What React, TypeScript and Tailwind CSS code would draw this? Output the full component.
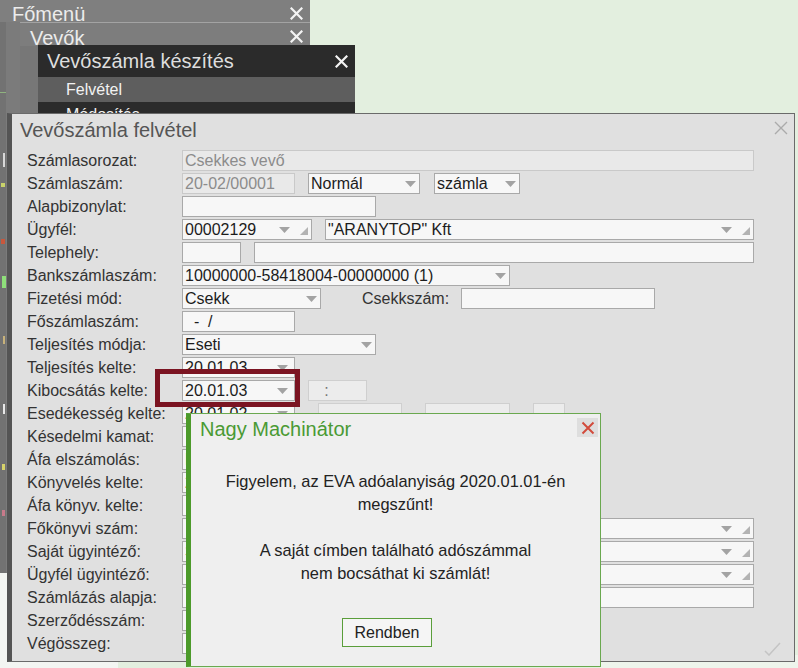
import React from "react";

function Arrow() {
  return (
    <svg width="11" height="6" viewBox="0 0 11 6" className="shrink-0">
      <path d="M0 0H11L5.5 6Z" fill="#a3a3a3" />
    </svg>
  );
}

function Grip() {
  return (
    <svg width="8" height="8" viewBox="0 0 8 8" className="shrink-0">
      <path d="M8 0V8H0Z" fill="#b3b3b3" />
    </svg>
  );
}

type FieldProps = {
  cls: string;
  text?: string;
  disabled?: boolean;
  faint?: boolean;
  kind?: "select" | "date" | "combo";
};

function Field({ cls, text = "", disabled, faint, kind }: FieldProps) {
  const look = disabled
    ? "bg-[#e9e9e9] border-[#c9c9c9] text-[#8c8c8c]"
    : faint
    ? "bg-[#ececec] border-[#cfcfcf] text-[#777]"
    : "bg-[#f7f7f7] border-[#a9a9a9] text-[#1c1c1c]";
  const pr = kind === "date" ? "pr-[6px]" : "pr-[3px]";
  return (
    <div className={`${cls} h-[21px] shrink-0 border flex items-center pl-[2px] ${pr} ${look}`}>
      <span className="flex-1 whitespace-pre overflow-hidden leading-[19px]">{text}</span>
      {(kind === "select" || kind === "date") && <Arrow />}
      {kind === "combo" && (
        <>
          <Arrow />
          <span className="ml-[10px] self-end mb-[4px] flex">
            <Grip />
          </span>
        </>
      )}
    </div>
  );
}

function Row({ label, children }: { label: string; children?: React.ReactNode }) {
  return (
    <div className="h-[23px] flex items-center">
      <div className="w-[170px] pl-[15px] shrink-0 text-[#333] whitespace-nowrap">{label}</div>
      {children}
    </div>
  );
}

function WhiteX({ size = 13 }: { size?: number }) {
  return (
    <svg width={size} height={size} viewBox="0 0 13 13" className="shrink-0">
      <path d="M1.5 1.5L11.5 11.5M11.5 1.5L1.5 11.5" stroke="#f4f4f4" strokeWidth="2.2" strokeLinecap="square" />
    </svg>
  );
}

export default function App() {
  return (
    <div className="relative w-[798px] h-[668px] overflow-hidden bg-[#e3efdf] font-['Liberation_Sans',Arial,sans-serif] text-[16px]">
      {/* pale patch bottom-left */}
      <div className="absolute left-0 top-[573px] w-[118px] h-[95px] bg-[#f3f5f2]" />
      <div className="absolute left-[600px] top-[655px] w-[198px] h-[13px] bg-[#eef5ec]" />

      {/* Főmenü window */}
      <div className="absolute left-0 top-0 w-[310px] h-[573px] bg-[#7b7b7b] flex flex-col">
        <div className="h-[22px] flex items-start justify-between pl-[12px] pr-[7px] bg-[#7f7f7f]">
          <span className="text-[20px] leading-[22px] mt-[3px] text-[#ececec] whitespace-nowrap">Főmenü</span>
          <span className="mt-[7px] flex">
            <WhiteX />
          </span>
        </div>
        <div className="flex-1 flex">
          <div className="w-[6px] flex flex-col bg-[#727272]">
            <div className="h-[70px]" />
            <div className="h-[1px] w-[6px] bg-[#8fb27f]" />
            <div className="h-[60px]" />
            <div className="h-[14px] w-[2px] ml-[3px] bg-[#d8d8d8]" />
            <div className="h-[16px]" />
            <div className="h-[4px] w-[4px] ml-[1px] bg-[#c9d36a]" />
            <div className="h-[52px]" />
            <div className="h-[5px] w-[4px] ml-[1px] bg-[#c8573c]" />
            <div className="h-[32px]" />
            <div className="h-[12px] w-[4px] ml-[2px] bg-[#8fe07a]" />
            <div className="h-[48px]" />
            <div className="h-[8px] w-[2px] ml-[3px] bg-[#c8b27a]" />
            <div className="h-[60px]" />
            <div className="h-[10px] w-[2px] ml-[3px] bg-[#e8e8e8]" />
            <div className="h-[50px]" />
            <div className="h-[6px] w-[3px] ml-[2px] bg-[#d7d36a]" />
            <div className="h-[40px]" />
            <div className="h-[6px] w-[3px] ml-[2px] bg-[#c87a8a]" />
          </div>
        </div>
      </div>

      {/* Vevők window */}
      <div className="absolute left-[20px] top-[22px] w-[290px] h-[551px] bg-[#777] border-t border-[#a3a3a3] flex flex-col">
        <div className="h-[23px] flex items-start justify-between pl-[10px] pr-[7px] bg-[#7d7d7d]">
          <span className="text-[20px] leading-[22px] mt-[4px] text-[#ececec] whitespace-nowrap">Vevők</span>
          <span className="mt-[7px] flex">
            <WhiteX />
          </span>
        </div>
      </div>

      {/* Vevőszámla készítés window */}
      <div className="absolute left-[38px] top-[45px] w-[317px] h-[82px] flex flex-col">
        <div className="h-[32px] bg-[#2b2b2b] flex items-center justify-between pl-[9px] pr-[7px]">
          <span className="text-[20px] leading-[24px] text-[#dedede] whitespace-nowrap">Vevőszámla készítés</span>
          <WhiteX />
        </div>
        <div className="h-[25px] bg-[#5e5e5e] flex items-center pl-[28px] text-[#f2f2f2]">Felvétel</div>
        <div className="h-[25px] bg-[#2b2b2b] flex items-center pl-[28px] text-[#f2f2f2]">Módosítás</div>
      </div>

      {/* Main dialog */}
      <div className="absolute left-[7px] top-[113px] w-[788px] h-[549px] bg-[#e0e0e0] border border-[#6a6a6a] border-l-[5px] border-l-[#545454] flex flex-col">
        <div className="h-[35px] flex items-start justify-between pl-[8px] pr-[6px] pt-[5px]">
          <span className="text-[20px] leading-[22px] text-[#555]">Vevőszámla felvétel</span>
          <svg width="14" height="14" viewBox="0 0 14 14" className="mt-[2px]">
            <path d="M1 1L13 13M13 1L1 13" stroke="#ababab" strokeWidth="1.4" />
          </svg>
        </div>
        <div className="flex flex-col">
          <Row label="Számlasorozat:">
            <Field cls="w-[572px]" text="Csekkes vevő" disabled />
          </Row>
          <Row label="Számlaszám:">
            <Field cls="w-[113px]" text="20-02/00001" disabled />
            <div className="ml-[13px] flex">
              <Field cls="w-[112px]" text="Normál" kind="select" />
            </div>
            <div className="ml-[14px] flex">
              <Field cls="w-[86px]" text="számla" kind="select" />
            </div>
          </Row>
          <Row label="Alapbizonylat:">
            <Field cls="w-[194px]" />
          </Row>
          <Row label="Ügyfél:">
            <Field cls="w-[130px]" text="00002129" kind="combo" />
            <div className="ml-[13px] flex">
              <Field cls="w-[429px]" text={'"ARANYTOP" Kft'} kind="combo" />
            </div>
          </Row>
          <Row label="Telephely:">
            <Field cls="w-[59px]" />
            <div className="ml-[13px] flex">
              <Field cls="w-[500px]" />
            </div>
          </Row>
          <Row label="Bankszámlaszám:">
            <Field cls="w-[328px]" text="10000000-58418004-00000000 (1)" kind="select" />
          </Row>
          <Row label="Fizetési mód:">
            <Field cls="w-[139px]" text="Csekk" kind="select" />
            <div className="ml-[41px] w-[99px] text-[#333]">Csekkszám:</div>
            <Field cls="w-[194px]" />
          </Row>
          <Row label="Főszámlaszám:">
            <Field cls="w-[113px]" text="  -  /" />
          </Row>
          <Row label="Teljesítés módja:">
            <Field cls="w-[194px]" text="Eseti" kind="select" />
          </Row>
          <Row label="Teljesítés kelte:">
            <Field cls="w-[113px]" text="20.01.03" kind="date" />
          </Row>
          <Row label="Kibocsátás kelte:">
            <Field cls="w-[113px]" text="20.01.03" kind="date" />
            <div className="ml-[13px] flex">
              <Field cls="w-[59px]" text="   :" faint />
            </div>
          </Row>
          <Row label="Esedékesség kelte:">
            <Field cls="w-[113px]" text="20.01.02" kind="date" />
            <div className="ml-[23px] flex">
              <Field cls="w-[84px]" faint />
            </div>
            <div className="ml-[23px] flex">
              <Field cls="w-[85px]" faint />
            </div>
            <div className="ml-[23px] flex">
              <Field cls="w-[32px]" faint />
            </div>
          </Row>
          <Row label="Késedelmi kamat:">
            <Field cls="w-[113px]" />
          </Row>
          <Row label="Áfa elszámolás:">
            <Field cls="w-[194px]" text="Normál" kind="select" />
          </Row>
          <Row label="Könyvelés kelte:">
            <Field cls="w-[113px]" text="20.01.03" kind="date" />
          </Row>
          <Row label="Áfa könyv. kelte:">
            <Field cls="w-[113px]" kind="date" />
          </Row>
          <Row label="Főkönyvi szám:">
            <Field cls="w-[572px]" kind="combo" />
          </Row>
          <Row label="Saját ügyintéző:">
            <Field cls="w-[572px]" text="Szabó Péter" kind="combo" />
          </Row>
          <Row label="Ügyfél ügyintéző:">
            <Field cls="w-[572px]" kind="combo" />
          </Row>
          <Row label="Számlázás alapja:">
            <Field cls="w-[572px]" />
          </Row>
          <Row label="Szerződésszám:">
            <Field cls="w-[194px]" />
          </Row>
          <Row label="Végösszeg:">
            <Field cls="w-[113px]" />
          </Row>
        </div>
        <svg width="17" height="14" viewBox="0 0 17 14" className="absolute right-[13px] bottom-[5px]">
          <path d="M1 9L5 13L16 1" stroke="#c4c4c4" strokeWidth="1.5" fill="none" />
        </svg>
      </div>

      {/* Red highlight box */}
      <div className="absolute left-[155px] top-[369px] w-[145px] h-[38px] border-[5px] border-[#7b1422]" />

      {/* Message modal */}
      <div className="absolute left-[186px] top-[413px] w-[415px] h-[254px] bg-[#efefef] border border-[#6aa84f] border-l-[5px] border-l-[#4c9a2a] flex flex-col">
        <div className="h-[26px] flex items-start justify-between pl-[9px] pr-[2px] pt-[4px]">
          <span className="text-[20px] leading-[22px] text-[#4a9a34]">Nagy Machinátor</span>
          <span className="w-[21px] h-[19px] bg-[#dedede] flex items-center justify-center">
            <svg width="14" height="14" viewBox="0 0 14 14">
              <path d="M1.5 1.5L12.5 12.5M12.5 1.5L1.5 12.5" stroke="#d24b3c" strokeWidth="2" />
            </svg>
          </span>
        </div>
        <div className="mt-[30px] text-center text-[16.4px] leading-[23px] text-[#222]">
          <div>Figyelem, az EVA adóalanyiság 2020.01.01-én</div>
          <div>megszűnt!</div>
          <div>&nbsp;</div>
          <div>A saját címben található adószámmal</div>
          <div>nem bocsáthat ki számlát!</div>
        </div>
        <button className="mt-[33px] ml-[151px] self-start w-[90px] h-[29px] border border-[#5a9e3a] bg-[#f5f5f5] text-[16px] text-[#222]">
          Rendben
        </button>
      </div>
    </div>
  );
}
